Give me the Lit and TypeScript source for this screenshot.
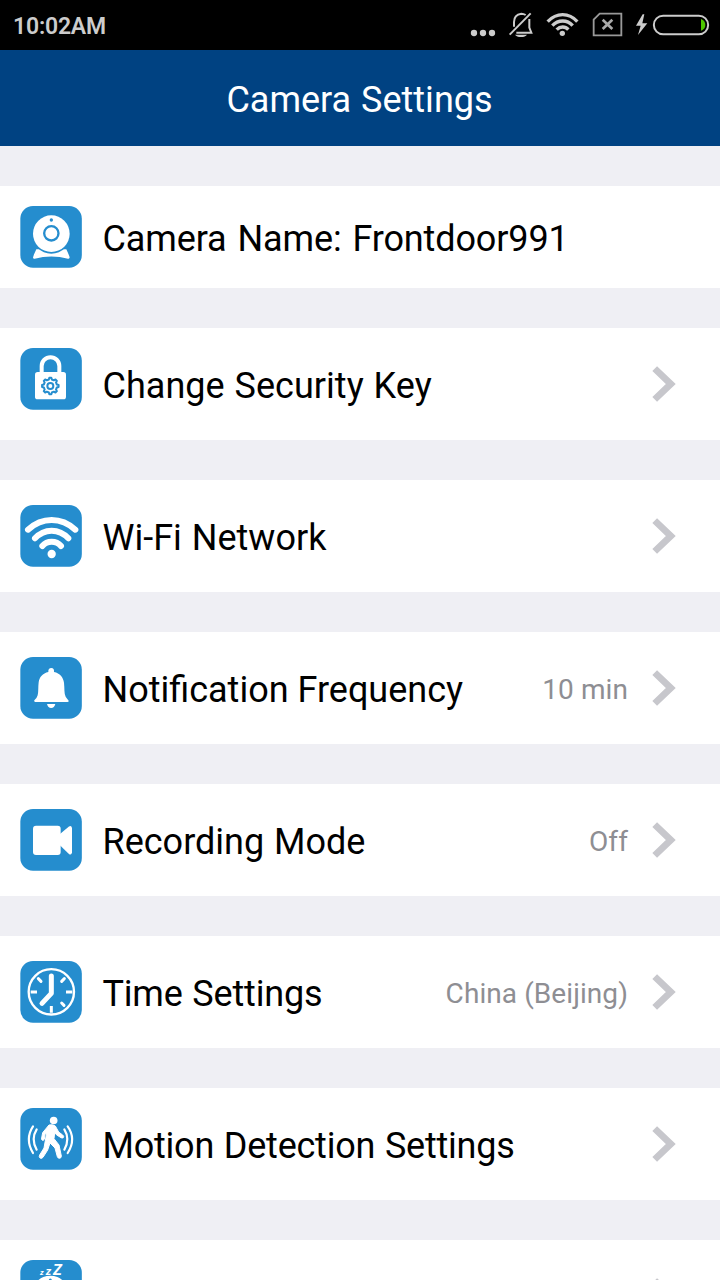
import { LitElement, html, css, svg } from "lit";
import { customElement } from "lit/decorators.js";

const gear = () => {
  const pts: string[] = [];
  for (let i = 0; i < 8; i++) {
    for (const [o, r] of [[-13, 20], [-7, 25], [7, 25], [13, 20]]) {
      const a = ((i * 45 + o) * Math.PI) / 180;
      pts.push(`${(121 + r * Math.sin(a)).toFixed(1)},${(144 - r * Math.cos(a)).toFixed(1)}`);
    }
  }
  return pts.join(" ");
};

const glyphs: Record<string, unknown> = {
  webcam: svg`
    <path d="M79 163C74 174 70 182 69 188Q70 192 74 191Q124 178 174 191Q179 192 179 187C177 179 172 171 169 163Z" fill="#fff"/>
    <circle cx="124" cy="118" r="58.5" fill="#258dce"/>
    <circle cx="124" cy="116" r="55" fill="#fff"/>
    <circle cx="124" cy="115" r="21.5" fill="none" stroke="#258dce" stroke-width="7"/>
    <circle cx="124" cy="75" r="5" fill="#258dce"/>`,
  lock: svg`
    <path d="M95 106V84a26.500 26.500 0 0 1 53 0V106" fill="none" stroke="#fff" stroke-width="12"/>
    <rect x="75" y="102" width="93" height="82" rx="8" fill="#fff"/>
    <polygon points=${gear()} fill="none" stroke="#258dce" stroke-width="6" stroke-linejoin="round"/>
    <circle cx="121" cy="144" r="9" fill="none" stroke="#258dce" stroke-width="6"/>`,
  wifi: svg`
    <g fill="none" stroke="#fff" stroke-width="18" stroke-linecap="round">
      <path d="M54 104Q86 75 125 75T196 104"/>
      <path d="M75 130Q96 107 125 107T175 130"/>
      <path d="M97 153Q108 140 125 140T153 153"/>
    </g>
    <circle cx="125" cy="177" r="12.500" fill="#fff"/>`,
  bell: svg`
    <path d="M115 75C114 67 118 63 124 63S133 67 132 75C150 79 160 91 162 107C164 125 162 139 167 149Q170 154 176 161Q177 165 172 165H76Q70 164 73 160Q81 153 83 145C86 133 84 120 86 106C88 90 98 79 115 75Z" fill="#fff"/>
    <path d="M111 171H136Q133 183 123.500 183T111 171Z" fill="#fff"/>`,
  video: svg`
    <rect x="69" y="80" width="83" height="88" rx="9" fill="#fff"/>
    <path d="M149 106L176 83Q184 77 186 87V160Q184 171 176 164L149 138Z" fill="#fff"/>`,
  clock: svg`
    <circle cx="124" cy="122.500" r="68" fill="none" stroke="#fff" stroke-width="7"/>
    <g fill="none" stroke="#fff" stroke-width="9" stroke-linecap="butt">
      <path d="M62 123H81M168 123H187M124 165V185"/>
      <path d="M85 83L93 91M163 83L155 91M155 156L162 163" stroke-linecap="round"/>
    </g>
    <path d="M124 75V127L96 157" fill="none" stroke="#fff" stroke-width="15" stroke-linecap="round" stroke-linejoin="round"/>`,
  motion: svg`
    <circle cx="131" cy="67.500" r="11.500" fill="#fff"/>
    <path d="M117 81Q128 78 136 84L146 102L158 111Q163 115 160 119Q157 121 153 119L139 110L134 104L132 122L147 141L154 174Q154 181 148 181Q144 181 142 176L135 150L120 135L113 156L99 178Q95 183 90 180Q86 176 89 171L102 150L110 105L105 109L103 124Q100 129 96 126Q94 124 95 120L98 104Z" fill="#fff" stroke="#fff" stroke-width="3" stroke-linejoin="round"/>
    <g fill="none" stroke="#fff" stroke-width="6.500" stroke-linecap="round">
      <path d="M69 85Q44 123 69 165M80 94Q62 123 80 155M173 85Q200 123 173 165M163 94Q181 123 163 155"/>
    </g>`,
  sleep: svg`
    <g fill="#fff" font-family="Roboto, sans-serif" font-weight="700" font-style="italic">
      <text x="90" y="74" font-size="22">z</text>
      <text x="107" y="74" font-size="33">z</text>
      <text x="129" y="74" font-size="45">Z</text>
    </g>
    <circle cx="121" cy="132" r="55" fill="#fff"/>
    <circle cx="121" cy="90" r="4.500" fill="#258dce"/>`,
};

interface Row {
  icon: string;
  label: string;
  spacing: number;
  words?: number;
  value?: string;
  kind?: string;
  plain?: boolean;
}

const rows: Row[] = [
  { icon: "webcam", label: "Camera Name: Frontdoor991", spacing: -0.12, words: 2.1, kind: "short", plain: true },
  { icon: "lock", label: "Change Security Key", spacing: 0.03, words: 0.9, kind: "raised" },
  { icon: "wifi", label: "Wi-Fi Network", spacing: 0.01, words: 1 },
  { icon: "bell", label: "Notification Frequency", spacing: 0, value: "10 min" },
  { icon: "video", label: "Recording Mode", spacing: 0, words: 1, value: "Off" },
  { icon: "clock", label: "Time Settings", spacing: -0.19, words: 1, value: "China (Beijing)" },
  { icon: "motion", label: "Motion Detection Settings", spacing: -0.22, words: 1, kind: "raised" },
  { icon: "sleep", label: "", spacing: 0, kind: "raised" },
];

@customElement("settings-row")
class SettingsRow extends LitElement {
  static properties = { row: { attribute: false } };
  declare row: Row;

  static styles = css`
    :host { display: block; background: #fff; color: #000; }
    .row { display: flex; height: 112px; box-sizing: border-box; padding: 0 44px 0 20px; align-items: flex-start; }
    .short { height: 102px; }
    .icon { flex: none; width: 62px; height: 62px; margin: 25px 20.5px 0 0; }
    .raised .icon, .short .icon { margin-top: 20px; }
    .label { flex: 1; white-space: nowrap; font-size: 36px; line-height: 42px; margin-top: 37px; }
    .short .label { margin-top: 32px; }
    .value { white-space: nowrap; font-size: 28px; line-height: 34px; margin: 41px 24px 0 0; color: #8e8e93; letter-spacing: 0.08px; }
    .chevron { flex: none; width: 24px; height: 38px; margin-top: 37px; }
  `;

  render() {
    const r = this.row;
    const top = r.icon === "webcam" ? 33 : 30;
    return html`<div class="row ${r.kind ?? ""}">
      <svg class="icon" viewBox="30 ${top} 186 186">
        <rect x="31" y=${top} width="184.500" height="185" rx="38" fill="#258dce" />
        ${glyphs[r.icon]}
      </svg>
      <span class="label" style="letter-spacing:${r.spacing}px;word-spacing:${r.words ?? 0}px">${r.label}</span>
      ${r.value ? html`<span class="value">${r.value}</span>` : ""}
      ${r.plain
        ? ""
        : html`<svg class="chevron" viewBox="0 0 24 38">
            <path d="M2.700 3.600L18.800 19L2.700 34.400" fill="none" stroke="#c7c7cc" stroke-width="6.800" />
          </svg>`}
    </div>`;
  }
}

@customElement("app-root")
export class AppRoot extends LitElement {
  static styles = css`
    :host { display: block; width: 720px; height: 1280px; overflow: hidden; background: #efeff4; font-family: Roboto, sans-serif; }
    .status { display: flex; justify-content: space-between; height: 50px; background: #000; color: #ccc; }
    .time { font-size: 23px; font-weight: 600; line-height: 54px; margin-left: 13px; letter-spacing: -0.2px; }
    .tray { width: 260px; height: 50px; }
    .title { height: 96px; box-sizing: border-box; padding-right: 1px; background: #004282; color: #fff; text-align: center; font-size: 36px; line-height: 100px; word-spacing: 1px; }
    .list { display: flex; flex-direction: column; gap: 40px; padding-top: 40px; }
  `;

  render() {
    return html`
      <div class="status">
        <span class="time">10:02AM</span>
        <svg class="tray" viewBox="0 0 780 150">
          <g fill="#ccc"><circle cx="42" cy="99" r="9.500" /><circle cx="69" cy="99" r="9.500" /><circle cx="96" cy="99" r="9.500" /></g>
          <g fill="none" stroke="#ccc" stroke-width="6">
            <path d="M149 104L212 40" />
            <path d="M162 80V66C162 50 170 43 184 41Q191 41 197 45M208 57V83L214 98H169" />
          </g>
          <path d="M165 104H201Q196 111 183 111T165 104Z" fill="#ccc" />
          <g fill="none" stroke="#ccc" stroke-width="10">
            <path d="M263 65Q283 44 308 44T352 65" /><path d="M277 77Q290 63 308 63T338 77" /><path d="M290 89Q298 81 308 81T325 89" />
          </g>
          <circle cx="307" cy="100" r="8" fill="#ccc" />
          <path d="M419 41H484V106H401V59Z" fill="none" stroke="#999" stroke-width="5.500" />
          <path d="M428 59L457 87M457 59L428 87" stroke="#aaa" stroke-width="8" />
          <path d="M548 43L528 77H542L534 105L562 70H547L553 43Z" fill="#ccc" />
          <rect x="581.500" y="47" width="163" height="56" rx="28" fill="none" stroke="#ccc" stroke-width="6" />
          <path d="M723 57Q736 62 736 75T723 92Z" fill="#4fc800" />
        </svg>
      </div>
      <div class="title">Camera Settings</div>
      <div class="list">${rows.map((r) => html`<settings-row .row=${r}></settings-row>`)}</div>
    `;
  }
}
